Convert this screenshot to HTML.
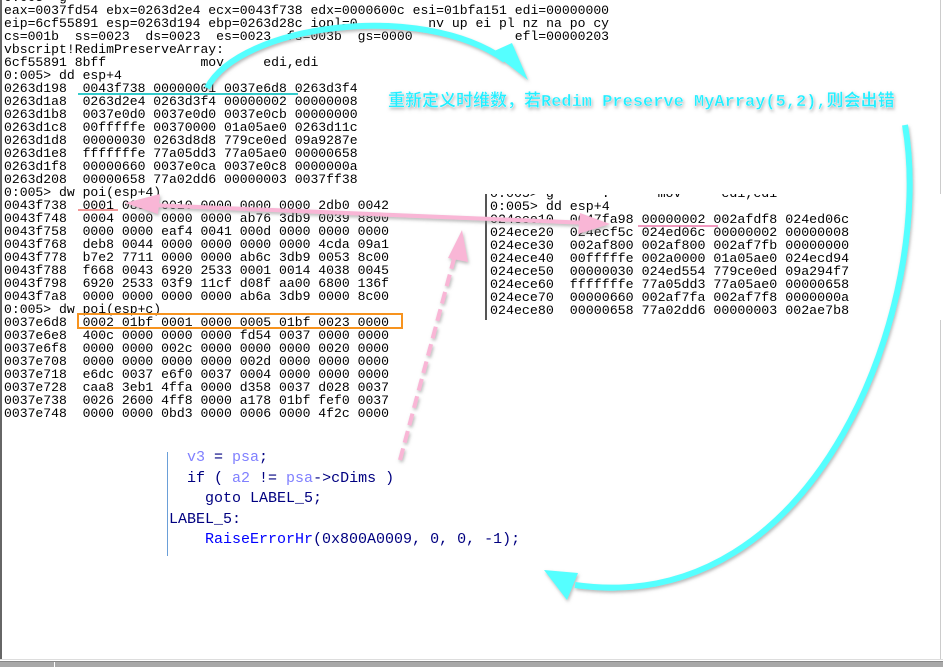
<!DOCTYPE html>
<html><head><meta charset="utf-8"><style>
html,body{margin:0;padding:0;background:#fff;width:943px;height:667px;overflow:hidden;position:relative}
pre{margin:0;position:absolute;font-family:"Liberation Mono",monospace;font-size:13.1px;line-height:13px;color:#000}
.code{position:absolute;font-family:"Liberation Mono",monospace;font-size:15px;line-height:20.5px;color:#000080;white-space:pre}
.lb{color:#8080ff}.bl{color:#0000ff}
</style></head><body>
<div style="position:absolute;left:0;top:0;width:2px;height:660px;background:#666"></div>
<div style="position:absolute;right:2px;top:0;width:1px;height:660px;background:#ccc"></div>
<pre style="left:4px;top:-9px">0:005> g
eax=0037fd54 ebx=0263d2e4 ecx=0043f738 edx=0000600c esi=01bfa151 edi=00000000
eip=6cf55891 esp=0263d194 ebp=0263d28c iopl=0         nv up ei pl nz na po cy
cs=001b  ss=0023  ds=0023  es=0023  fs=003b  gs=0000             efl=00000203
vbscript!RedimPreserveArray:
6cf55891 8bff            mov     edi,edi
0:005> dd esp+4
0263d198  0043f738 00000001 0037e6d8 0263d3f4
0263d1a8  0263d2e4 0263d3f4 00000002 00000008
0263d1b8  0037e0d0 0037e0d0 0037e0cb 00000000
0263d1c8  00fffffe 00370000 01a05ae0 0263d11c
0263d1d8  00000030 0263d8d8 779ce0ed 09a9287e
0263d1e8  fffffffe 77a05dd3 77a05ae0 00000658
0263d1f8  00000660 0037e0ca 0037e0c8 0000000a
0263d208  00000658 77a02dd6 00000003 0037ff38
0:005> dw poi(esp+4)
0043f738  0001 0880 0010 0000 0000 0000 2db0 0042
0043f748  0004 0000 0000 0000 ab76 3db9 0039 8800
0043f758  0000 0000 eaf4 0041 000d 0000 0000 0000
0043f768  deb8 0044 0000 0000 0000 0000 4cda 09a1
0043f778  b7e2 7711 0000 0000 ab6c 3db9 0053 8c00
0043f788  f668 0043 6920 2533 0001 0014 4038 0045
0043f798  6920 2533 03f9 11cf d08f aa00 6800 136f
0043f7a8  0000 0000 0000 0000 ab6a 3db9 0000 8c00
0:005> dw poi(esp+c)
0037e6d8  0002 01bf 0001 0000 0005 01bf 0023 0000
0037e6e8  400c 0000 0000 0000 fd54 0037 0000 0000
0037e6f8  0000 0000 002c 0000 0000 0000 0020 0000
0037e708  0000 0000 0000 0000 002d 0000 0000 0000
0037e718  e6dc 0037 e6f0 0037 0004 0000 0000 0000
0037e728  caa8 3eb1 4ffa 0000 d358 0037 d028 0037
0037e738  0026 2600 4ff8 0000 a178 01bf fef0 0037
0037e748  0000 0000 0bd3 0000 0006 0000 4f2c 0000</pre>
<div style="position:absolute;left:485px;top:194px;width:458px;height:126px;background:#fff;border-left:2px solid #555;overflow:hidden">
<pre style="left:3px;top:-7px;font-size:13.3px">0:005> g      .      mov     edi,edi
0:005> dd esp+4
024ece10  0047fa98 00000002 002afdf8 024ed06c
024ece20  024ecf5c 024ed06c 00000002 00000008
024ece30  002af800 002af800 002af7fb 00000000
024ece40  00fffffe 002a0000 01a05ae0 024ecd94
024ece50  00000030 024ed554 779ce0ed 09a294f7
024ece60  fffffffe 77a05dd3 77a05ae0 00000658
024ece70  00000660 002af7fa 002af7f8 0000000a
024ece80  00000658 77a02dd6 00000003 002ae7b8</pre>
</div>
<div style="position:absolute;left:77px;top:313px;width:326px;height:16px;border:2px solid #f7931e;box-sizing:border-box"></div>
<div style="position:absolute;left:167px;top:452px;width:1px;height:104px;background:#6a9fd8"></div>
<div class="code" style="left:169px;top:448px"><span class="lb">  v3</span> = <span class="lb">psa</span>;
  if ( <span class="lb">a2</span> != <span class="lb">psa</span>->cDims )
    goto LABEL_5;
LABEL_5:
    <span class="bl">RaiseErrorHr</span>(0x800A0009, 0, 0, -1);</div>
<div style="position:absolute;left:0;top:659px;width:943px;height:1px;background:#ddd"></div>
<div style="position:absolute;left:0;top:661px;width:943px;height:6px;background:#a8a8a8;border-top:1px solid #888"></div>
<div style="position:absolute;left:54px;top:662px;width:1px;height:5px;background:#fff"></div>
<svg width="943" height="667" style="position:absolute;left:0;top:0" xmlns="http://www.w3.org/2000/svg">
<defs><filter id="sh"><feDropShadow dx="1" dy="2" stdDeviation="1.5" flood-color="#888" flood-opacity="0.6"/></filter></defs>
<line x1="78" y1="94" x2="298" y2="94" stroke="#3cc" stroke-width="2"/>
<line x1="78" y1="210" x2="118" y2="210" stroke="#e77" stroke-width="1.5"/>
<line x1="638" y1="226" x2="718" y2="226" stroke="#e7a" stroke-width="1.5"/>
<g filter="url(#sh)">
<path d="M207 88 C240 25 420 0 505 60" fill="none" stroke="#5ff" stroke-width="6"/>
<polygon points="492,52 528,80 512,43" fill="#5ff"/>
<path d="M905 125 C935 300 820 620 575 585" fill="none" stroke="#5ff" stroke-width="6"/>
<polygon points="544,570 578,573 567,600" fill="#5ff"/>
<path d="M150 205 L590 223" stroke="#f9b6d6" stroke-width="4"/>
<polygon points="125,203 160,194 158,214" fill="#f9b6d6"/>
<polygon points="610,224 580,213 578,234" fill="#f9b6d6"/>
<path d="M400 460 L455 255" stroke="#f9b6d6" stroke-width="4" stroke-dasharray="12 6"/>
<polygon points="462,230 448,258 468,262" fill="#f9b6d6"/>
</g>
<text x="388" y="106" font-family="Liberation Mono, Noto Sans CJK SC, sans-serif" font-size="17" font-weight="bold" fill="#2ef" stroke="#fff" stroke-width="0.3" filter="url(#sh)">重新定义时维数，若Redim Preserve MyArray(5,2),则会出错</text>
</svg>
</body></html>
